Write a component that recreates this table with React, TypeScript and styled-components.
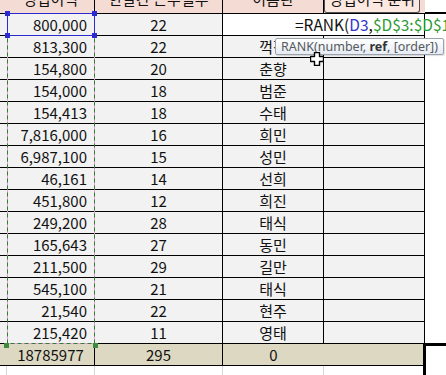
import React from 'react'
import styled, { createGlobalStyle } from 'styled-components'

const GlobalStyle = createGlobalStyle`
    html, body {
        margin: 0;
        padding: 0;
        background: #ffffff;
    }
    body {
        font-family: "Noto Sans CJK KR", "Noto Sans", sans-serif;
    }
`

const rows = [
    { amount: '800,000', days: 22, name: '' },
    { amount: '813,300', days: 22, name: '꺽정' },
    { amount: '154,800', days: 20, name: '춘향' },
    { amount: '154,000', days: 18, name: '범준' },
    { amount: '154,413', days: 18, name: '수태' },
    { amount: '7,816,000', days: 16, name: '희민' },
    { amount: '6,987,100', days: 15, name: '성민' },
    { amount: '46,161', days: 14, name: '선희' },
    { amount: '451,800', days: 12, name: '희진' },
    { amount: '249,200', days: 28, name: '태식' },
    { amount: '165,643', days: 27, name: '동민' },
    { amount: '211,500', days: 29, name: '길만' },
    { amount: '545,100', days: 21, name: '태식' },
    { amount: '21,540', days: 22, name: '현주' },
    { amount: '215,420', days: 11, name: '영태' },
]

const Sheet = styled.div`
    position: relative;
    width: 446px;
    height: 375px;
    overflow: hidden;
    display: grid;
    grid-template-columns: 7px 88px 128px 101px 101px 1fr;
    grid-template-rows: 14px repeat(15, 22px) 22px 1fr;
    font-size: 15px;
    color: #111111;
`

const HeaderCell = styled.div<{ $edge?: boolean }>`
    height: 14px;
    overflow: hidden;
    background: #f4dcd5;
    border-bottom: 1px solid #000;
    border-right: ${({ $edge }) => ($edge ? 'none' : '1px solid #000')};
    box-sizing: border-box;
    text-align: center;
    white-space: nowrap;
`

const HeaderText = styled.div`
    line-height: 15px;
    margin-top: -9px;
`

const RankHeader = styled.div`
    height: 14px;
    box-sizing: border-box;
    background: #f4dcd5;
    border-bottom: 1px solid #000;
    overflow: hidden;
    display: flex;
`

const RankBox = styled.div`
    width: 96px;
    height: 13px;
    box-sizing: border-box;
    background: #fbe8e1;
    border: 1px solid #505050;
    border-top: none;
    border-radius: 0 0 3px 3px;
    text-align: center;
    white-space: nowrap;
    overflow: hidden;
`

const BlankHead = styled.div`
    background: #ffffff;
    border-bottom: 2px solid #000;
    box-sizing: border-box;
    height: 14px;
`

const Cell = styled.div<{ $align?: 'left' | 'center' | 'right'; $noRight?: boolean }>`
    background: #f2f2f2;
    border-bottom: 1px solid #000;
    border-right: ${({ $noRight }) => ($noRight ? 'none' : '1px solid #000')};
    box-sizing: border-box;
    display: flex;
    align-items: center;
    justify-content: ${({ $align }) =>
        $align === 'right' ? 'flex-end' : $align === 'left' ? 'flex-start' : 'center'};
    padding: 0 7px 0 0;
    line-height: 21px;
    white-space: nowrap;
    ${({ $align }) => ($align === 'center' ? 'padding: 0;' : '')}
`

const SideCell = styled.div<{ $tone?: string }>`
    background: ${({ $tone }) => $tone || '#f2f2f2'};
    border-bottom: 1px solid #000;
    box-sizing: border-box;
`

const OuterCell = styled.div`
    background: #ffffff;
`

const EditCell = styled.div`
    grid-column: span 2;
    background: #ffffff;
    border-bottom: 1px solid #000;
    border-right: 1px solid #000;
    box-sizing: border-box;
    padding-left: 72px;
    line-height: 21px;
    font-size: 15.5px;
    white-space: nowrap;
    position: relative;
    z-index: 2;
    overflow: visible;
`

const Ref = styled.span<{ $color: string }>`
    color: ${({ $color }) => $color};
`

const TotalCell = styled.div<{ $noRight?: boolean }>`
    background: #dcd8c1;
    border-top: 1px solid #000;
    border-bottom: 1px solid #000;
    border-right: ${({ $noRight }) => ($noRight ? 'none' : '1px solid #000')};
    box-sizing: border-box;
    display: flex;
    align-items: center;
    justify-content: center;
    line-height: 21px;
    margin-top: -1px;
`

const GridLine = styled.div<{ $last?: boolean }>`
    border-right: ${({ $last }) => ($last ? 'none' : '1px solid #d6d6d6')};
    box-sizing: border-box;
`

const Marquee = styled.svg`
    position: absolute;
    left: 7px;
    top: 13px;
    pointer-events: none;
    z-index: 3;
`

const RefBox = styled.div`
    position: absolute;
    left: 7px;
    top: 13px;
    width: 88px;
    height: 23px;
    box-sizing: border-box;
    border: 1px solid #2a2ad0;
    z-index: 4;
`

const Handle = styled.div<{ $x: 'l' | 'r'; $y: 't' | 'b'; $color: string }>`
    position: absolute;
    width: 5px;
    height: 5px;
    background: ${({ $color }) => $color};
    ${({ $x }) => ($x === 'l' ? 'left: -3px;' : 'right: -3px;')}
    ${({ $y }) => ($y === 't' ? 'top: -3px;' : 'bottom: -3px;')}
`

const CopyCorners = styled.div`
    position: absolute;
    left: 7px;
    top: 340px;
    width: 88px;
    height: 5px;
    z-index: 4;
`

const Tooltip = styled.div`
    position: absolute;
    left: 275px;
    top: 38px;
    height: 17px;
    padding: 0 5px;
    box-sizing: border-box;
    border: 1px solid #9aa3ad;
    border-radius: 2px;
    background: linear-gradient(#ffffff, #e6ebf3);
    box-shadow: 1px 1px 1px rgba(0, 0, 0, 0.12);
    font-family: "Noto Sans", "Liberation Sans", sans-serif;
    font-size: 12.5px;
    line-height: 15px;
    color: #555a60;
    white-space: nowrap;
    z-index: 5;

    b {
        color: #333;
    }
`

const Cursor = styled.svg`
    position: absolute;
    left: 310px;
    top: 52px;
    z-index: 6;
`

const ActiveCell = styled.div`
    position: absolute;
    left: 423px;
    top: 343px;
    width: 40px;
    height: 40px;
    box-sizing: border-box;
    border: 3px solid #000;
    z-index: 4;
`

function App() {
    return (
        <>
            <GlobalStyle />
            <Sheet>
                <HeaderCell $edge />
                <HeaderCell><HeaderText>영업이익</HeaderText></HeaderCell>
                <HeaderCell><HeaderText>한달간 근무일수</HeaderText></HeaderCell>
                <HeaderCell><HeaderText>이름란</HeaderText></HeaderCell>
                <RankHeader>
                    <RankBox><HeaderText>영업이익 순위</HeaderText></RankBox>
                </RankHeader>
                <BlankHead />

                {rows.map((r, i) => (
                    <React.Fragment key={i}>
                        <SideCell />
                        <Cell $align="right">{r.amount}</Cell>
                        <Cell $align="center">{r.days}</Cell>
                        {i === 0 ? (
                            <EditCell>
                                =RANK(<Ref $color="#3434c8">D3</Ref>,<Ref $color="#2e9a35">$D$3:$D$17</Ref>
                            </EditCell>
                        ) : (
                            <>
                                <Cell $align="center">{r.name}</Cell>
                                <Cell $align="center" />
                            </>
                        )}
                        <OuterCell />
                    </React.Fragment>
                ))}

                <SideCell $tone="#dcd8c1" style={{ borderTop: '1px solid #000', marginTop: -1 }} />
                <TotalCell>18785977</TotalCell>
                <TotalCell>295</TotalCell>
                <TotalCell $noRight>0</TotalCell>
                <TotalCell />
                <OuterCell />

                <GridLine />
                <GridLine />
                <GridLine />
                <GridLine />
                <GridLine $last />
                <GridLine $last />

                <Marquee width="88" height="331" viewBox="0 0 88 331">
                    <rect x="0.5" y="0.5" width="87" height="330" fill="none" stroke="#e6a0d8" strokeWidth="1" />
                    <rect x="0.5" y="0.5" width="87" height="330" fill="none" stroke="#2f7d2f" strokeWidth="1" strokeDasharray="4 3" />
                </Marquee>
                <RefBox>
                    <Handle $x="l" $y="t" $color="#2a2ad0" />
                    <Handle $x="r" $y="t" $color="#2a2ad0" />
                    <Handle $x="l" $y="b" $color="#2a2ad0" />
                    <Handle $x="r" $y="b" $color="#2a2ad0" />
                </RefBox>
                <CopyCorners>
                    <Handle $x="l" $y="b" $color="#3c8a3c" />
                    <Handle $x="r" $y="b" $color="#3c8a3c" />
                </CopyCorners>

                <Tooltip>
                    RANK(number, <b>ref</b>, [order])
                </Tooltip>

                <Cursor width="14" height="14" viewBox="0 0 14 14">
                    <path
                        d="M4.5 0.5h5v4h4v5h-4v4h-5v-4h-4v-5h4z"
                        fill="#ffffff"
                        stroke="#000"
                        strokeWidth="1.4"
                        strokeLinejoin="round"
                    />
                </Cursor>

                <ActiveCell />
            </Sheet>
        </>
    )
}

export default App
